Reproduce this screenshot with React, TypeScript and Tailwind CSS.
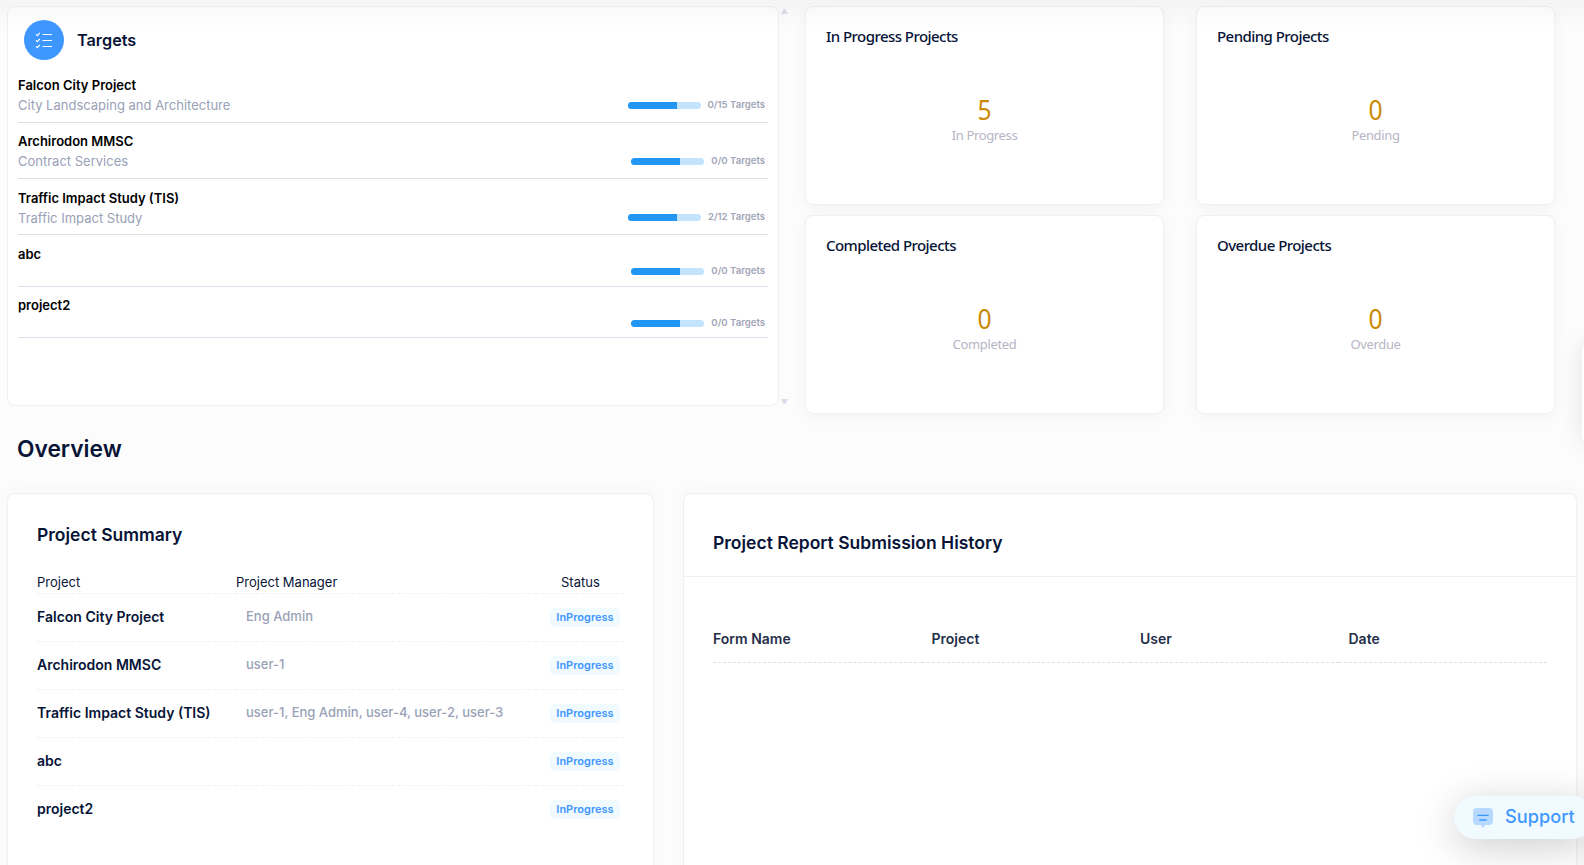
import type { ReactNode } from "react";

const targets = [
  { name: "Falcon City Project", type: "City Landscaping and Architecture", count: "0/15", row: "h-[56px]", text: "pt-[8px]", bar: "pt-[30px]" },
  { name: "Archirodon MMSC", type: "Contract Services", count: "0/0", row: "h-[56px]", text: "pt-[8px]", bar: "pt-[30px]" },
  { name: "Traffic Impact Study (TIS)", type: "Traffic Impact Study", count: "2/12", row: "h-[56px]", text: "pt-[9px]", bar: "pt-[30px]" },
  { name: "abc", type: "", count: "0/0", row: "h-[52px]", text: "pt-[9px]", bar: "pt-[28px]" },
  { name: "project2", type: "", count: "0/0", row: "h-[51px]", text: "pt-[8px]", bar: "pt-[28px]" },
];

const summary = [
  { name: "Falcon City Project", manager: "Eng Admin" },
  { name: "Archirodon MMSC", manager: "user-1" },
  { name: "Traffic Impact Study (TIS)", manager: "user-1, Eng Admin, user-4, user-2, user-3" },
  { name: "abc", manager: "" },
  { name: "project2", manager: "" },
];

const stats = [
  { title: "In Progress Projects", value: 5, label: "In Progress" },
  { title: "Pending Projects", value: 0, label: "Pending" },
  { title: "Completed Projects", value: 0, label: "Completed" },
  { title: "Overdue Projects", value: 0, label: "Overdue" },
];

function Card({ className, children }: { className: string; children?: ReactNode }) {
  return (
    <section className={`rounded-lg border border-[#eff0f2] bg-white ${className}`}>
      {children}
    </section>
  );
}

function ListIcon() {
  return (
    <svg width="18" height="18" viewBox="0 0 18 18" fill="none" stroke="#fff" strokeWidth="1.2">
      <path d="M7.500 3.500h9.500M7.500 9.500h9.500M7.500 15.500h9.500" />
      <path d="M1 3.300l1.300 1.300L4.800 1.800M1 9.300l1.300 1.300L4.800 7.800M1 15.300l1.300 1.300L4.800 13.800" />
    </svg>
  );
}

function Targets() {
  return (
    <div className="flex">
      <section className="h-[400px] w-[772px] rounded-lg border border-[#eff0f2] bg-white pt-[13px] pr-[10px] pl-[10px]">
        <header className="flex h-10 items-center gap-[13px] pl-[6px]">
          <span className="flex size-10 items-center justify-center rounded-full bg-[#3e97ff]">
            <ListIcon />
          </span>
          <h2 className="text-[16.25px] font-semibold text-[#071437]">Targets</h2>
        </header>
        <ul className="pt-[7px]">
          {targets.map((t) => (
            <li key={t.name} className={`flex justify-between border-b border-[#dbdfe9] ${t.row}`}>
              <div className={t.text}>
                <div className="text-[13px] leading-5 font-semibold text-black">{t.name}</div>
                <div className="text-[13px] leading-5 text-[#99a1b7]">{t.type}</div>
              </div>
              <div className={`flex items-center gap-[7px] self-start pr-[3px] ${t.bar}`}>
                <div className="mt-[2px] h-[7px] w-[73px] overflow-hidden rounded-full bg-[#c4e4fe]">
                  <div className="h-full w-[49px] bg-[#2196f3]" />
                </div>
                <span className="text-[9.6px] leading-[15px] font-semibold text-[#a1a5b7]">{t.count} Targets</span>
              </div>
            </li>
          ))}
        </ul>
      </section>
      <div className="flex h-[400px] w-[10px] flex-col items-center justify-between pt-[3px] pb-px">
        <svg width="7" height="5" viewBox="0 0 7 5"><path d="M2.500 0h2L7 5H0z" fill="#dbdfe9" /></svg>
        <svg width="7" height="6" viewBox="0 0 7 6"><path d="M0 0h7L4.500 5h-2z" fill="#dbdfe9" /></svg>
      </div>
    </div>
  );
}

function Stats() {
  return (
    <div className="grid grid-cols-[359px_359px] grid-rows-[199px_199px] gap-x-[32px] gap-y-[10px] font-['Noto_Sans','Open_Sans',sans-serif]">
      {stats.map((s) => (
        <Card key={s.title} className="flex flex-col px-5 pt-[19px] shadow-[0_4px_16px_0_rgba(0,0,0,0.035)]">
          <h3 className="text-[15px] leading-5 font-medium tracking-[-0.55px] text-[#071437]">{s.title}</h3>
          <div className="pt-[46px] text-center">
            <div className="scale-x-88 text-[28px] leading-[34px] text-[#ca8a04]">{s.value}</div>
            <div className="text-[13px] leading-[18px] tracking-[-0.35px] text-[#b5b5c3]">{s.label}</div>
          </div>
        </Card>
      ))}
    </div>
  );
}

function ProjectSummary() {
  return (
    <Card className="h-[420px] w-[647px] px-[29px] pt-[29px] shadow-[0_0_20px_0_rgba(76,87,125,0.03)]">
      <h2 className="text-[17.5px] leading-6 font-semibold text-[#071437]">Project Summary</h2>
      <div className="mt-[25px] grid h-[22px] grid-cols-[199px_300px_88px] text-[13px] leading-5 text-[#071437]">
        <div className="border-b border-dashed border-[#f1f1f4]">Project</div>
        <div className="border-b border-dashed border-[#f1f1f4]">Project Manager</div>
        <div className="border-b border-dashed border-[#f1f1f4] pl-[25px]">Status</div>
      </div>
      {summary.map((r) => (
        <div key={r.name} className="group grid h-12 grid-cols-[199px_300px_88px]">
          <div className="border-b border-dashed border-[#f1f1f4] pt-[13px] text-[14px] leading-5 font-semibold text-[#071437] group-last:border-0">{r.name}</div>
          <div className="border-b border-dashed border-[#f1f1f4] pt-[12px] pl-[10px] text-[13px] leading-5 font-medium text-[#99a1b7] group-last:border-0">{r.manager}</div>
          <div className="border-b border-dashed border-[#f1f1f4] pt-[14px] pl-[14px] group-last:border-0">
            <span className="flex h-[19px] w-[70px] items-center justify-center rounded-[5px] bg-[#f1faff] text-[11px] font-semibold text-[#3e97ff]">InProgress</span>
          </div>
        </div>
      ))}
    </Card>
  );
}

function ReportHistory() {
  return (
    <Card className="h-[420px] w-[894px] shadow-[0_0_20px_0_rgba(76,87,125,0.03)]">
      <header className="flex h-[83px] items-center border-b border-[#f1f1f4] px-[29px] pt-[16px]">
        <h2 className="text-[17.5px] font-semibold text-[#071437]">Project Report Submission History</h2>
      </header>
      <div className="mx-[29px] grid grid-cols-4 pt-[52px] text-[14px] leading-5 font-semibold text-[#252f4a]">
        {["Form Name", "Project", "User", "Date"].map((c) => (
          <div key={c} className="h-[34px] border-b border-dashed border-[#dbdfe9] pl-[10px] first:pl-0">{c}</div>
        ))}
      </div>
    </Card>
  );
}

function Support() {
  return (
    <button className="absolute top-[796px] left-[1454px] flex h-[43px] w-[140px] items-center gap-[13px] rounded-full bg-[#f1faff] pb-[2px] pl-[19px] text-[18.2px] font-medium text-[#3e97ff] shadow-[0_8px_40px_0_rgba(0,0,0,0.2)]">
      <svg width="20" height="20" viewBox="0 0 20 20" className="mt-[2px]">
        <path d="M4 0h12a4 4 0 0 1 4 4v9a4 4 0 0 1-4 4h-3.600l-1.700 2.300a.9.9 0 0 1-1.400 0L7.600 17H4a4 4 0 0 1-4-4V4a4 4 0 0 1 4-4z" fill="#b8d9ff" />
        <path d="M4.800 7.300h10.400M6.800 12h6.400" stroke="#3e97ff" strokeWidth="1.300" strokeLinecap="round" />
      </svg>
      <span className="-ml-px">Support</span>
    </button>
  );
}

export default function App() {
  return (
    <div className="relative h-[865px] w-[1584px] overflow-hidden bg-[#fcfcfc] font-['Inter',sans-serif]">
      <div className="flex gap-[16px] pt-[6px] pl-[7px]">
        <Targets />
        <Stats />
      </div>
      <h1 className="pt-[19px] pl-[17px] text-[22.75px] leading-8 font-semibold text-[#071437]">Overview</h1>
      <div className="flex gap-[29px] pt-[28px] pl-[7px]">
        <ProjectSummary />
        <ReportHistory />
      </div>
      <div className="pointer-events-none absolute inset-x-0 top-0 h-[31px] bg-linear-to-b from-black/[0.03] to-transparent" />
      <div className="absolute top-[344px] left-[1582px] h-[98px] w-10 rounded-md bg-white shadow-[0_0_24px_0_rgba(0,0,0,0.1)]" />
      <Support />
    </div>
  );
}
